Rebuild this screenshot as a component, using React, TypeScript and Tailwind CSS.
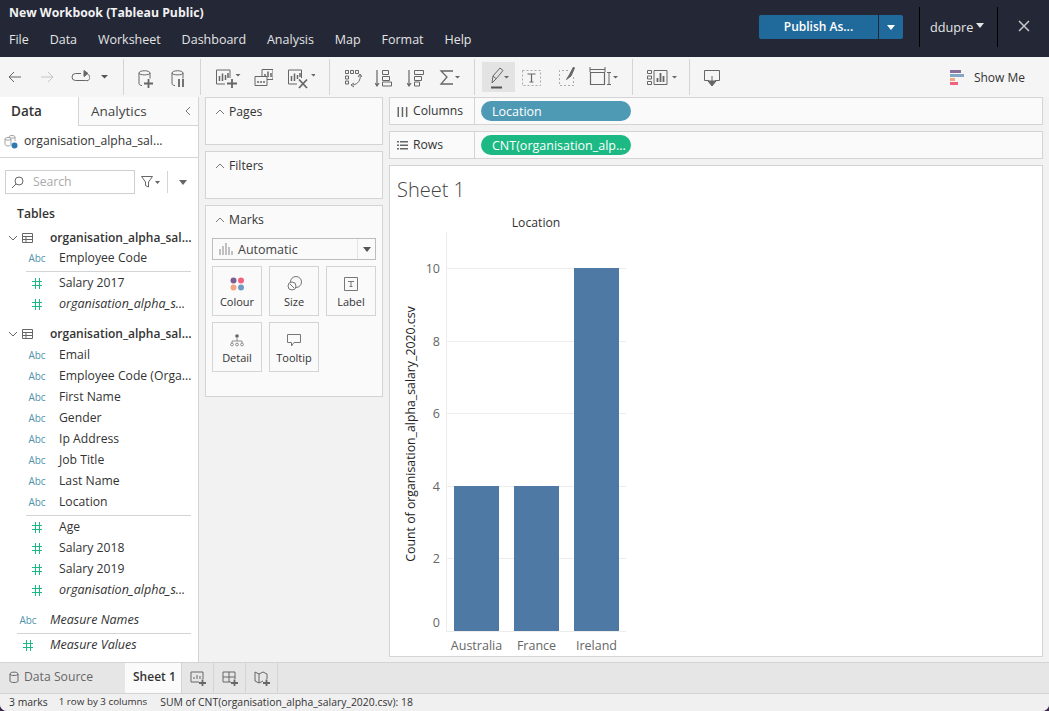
import React from "react";

const S = "#666666";
type IP = { w: number; h?: number; children: React.ReactNode; className?: string };
function Ic({ w, h = 24, children, className = "" }: IP) {
  return (
    <svg width={w} height={h} viewBox={`0 0 ${w} ${h}`} fill="none" stroke={S} strokeWidth={1} className={`shrink-0 ${className}`}>
      {children}
    </svg>
  );
}
const Caret = ({ x, y, s = 2.5, c = "#666" }: { x: number; y: number; s?: number; c?: string }) => (
  <path d={`M${x} ${y}h${s * 2}l-${s} ${s}z`} fill={c} stroke="none" />
);
const Cyl = ({ x, y }: { x: number; y: number }) => (
  <path d={`M${x + 11} ${y + 8}V${y + 2.5}C${x + 11} ${y - 0.5} ${x} ${y - 0.5} ${x} ${y + 2.5}V${y + 13}c0 1 1 2 3 2M${x} ${y + 2.5}c0 2.5 11 2.5 11 0`} />
);

function Sep({ ml }: { ml: number }) {
  return <div className="w-px h-[36px] bg-[#d4d4d4] shrink-0" style={{ marginLeft: ml }} />;
}

function Toolbar() {
  return (
    <div className="h-[40px] bg-[#f5f5f5] flex items-center shrink-0 pl-[8px]">
      <Ic w={14}><path d="M13 12H1M6 7l-5 5 5 5" /></Ic>
      <Ic w={14} className="ml-[18px]"><path stroke="#c4c4c4" d="M1 12h12M8 7l5 5-5 5" /></Ic>
      <Ic w={19} className="ml-[17px]"><path d="M10 8.500H4.500a3 3 0 0 0 0 7h10a3 3 0 0 0 2.500-6" /><path d="M13 5.500v6l4-3z" fill={S} /></Ic>
      <Ic w={9} className="ml-[10px]"><Caret x={1} y={10} s={3.5} c="#555" /></Ic>
      <Sep ml={14} />
      <Ic w={17} className="ml-[14px]"><Cyl x={1} y={5.5} /><path strokeWidth={1.8} d="M6 18.500h9M10.500 14v9" /></Ic>
      <Ic w={14} className="ml-[16px]"><Cyl x={1} y={5.5} /><path strokeWidth={1.8} d="M8 14v8M12 14v8" /></Ic>
      <Sep ml={15} />
      <Ic w={26} className="ml-[14px]"><path d="M15 13V5H1.500v14H10" /><path strokeWidth={1.5} d="M4.500 11v5M7.500 8.500V16M10.500 10v5M13 8v5" /><path strokeWidth={1.8} d="M12 18.500h10M17 14v9" /><Caret x={20.5} y={9} s={2.5} /></Ic>
      <Ic w={19} className="ml-[13px]"><path d="M8 4.500h11v10H8z" /><path d="M1 11.500h12v9H1z" fill="#f5f5f5" /><path strokeWidth={1.5} d="M11 12V9M14 12V6.500M17 12V8M4 18v-2M7 18v-2M10 18v-2" /></Ic>
      <Ic w={28} className="ml-[14px]"><path d="M14.500 13V5H1.500v14H10" /><path strokeWidth={1.5} d="M4.500 11v5M7.500 8.500V16M10.500 10v4M13 8v4" /><path strokeWidth={1.8} d="M12 14.500l8 8.500M20 14.500l-8 8.500" /><Caret x={24} y={9} s={2.5} /></Ic>
      <Sep ml={14} />
      <Ic w={18} className="ml-[14px]"><path d="M1.500 5.500h3v3h-3zM6.500 5.500h3v3h-3zM11.500 5.500h3v3h-3zM1.500 11h3v3h-3zM1.500 16h3v3h-3z" /><path d="M16 10c1 5-2 9-7 10" /><path d="M14 12l2-3 2 3M10 18l-3 2 3 2" /></Ic>
      <Ic w={17} className="ml-[13px]"><path d="M2 5v15M0 18l2 3 2-3" strokeWidth={1.2} /><path d="M7.500 5.500h6v4h-6zM7.500 11.500h7v4h-7zM7.500 17h9v4h-9z" /></Ic>
      <Ic w={17} className="ml-[15px]"><path d="M2 5v15M0 18l2 3 2-3" strokeWidth={1.2} /><path d="M7.500 5.500h9v4h-9zM7.500 11.500h7v4h-7zM7.500 17h5v4h-5z" /></Ic>
      <Ic w={21} className="ml-[15px]"><path strokeWidth={1.3} d="M14 6H2l6 6-6 7h12" /><Caret x={16} y={11} s={2.5} /></Ic>
      <Sep ml={14} />
      <div className="ml-[7px] w-[33px] h-[30px] bg-[#e3e3e3] flex items-center pl-[7px] shrink-0">
        <Ic w={22}><path d="M3 18l1-7 7-8 3 2.500-7 8.500z" strokeWidth={1} /><path d="M4 11l3 2.500" /><path d="M2 22.500h11" strokeWidth={2} stroke="#555" /><Caret x={15} y={11} s={2.5} /></Ic>
      </div>
      <Ic w={20} className="ml-[7px]"><path d="M.5 5.500h18v15H.5z" stroke="#aaa" strokeDasharray="2 2" /><path d="M5.500 9h8M9.500 9v8M7.500 17h4" strokeWidth={1.2} /></Ic>
      <Ic w={16} className="ml-[17px]"><path d="M9 5.500H.5v15h14V11" stroke="#aaa" strokeDasharray="2 2" /><path d="M14.500 2l-4 7.500-3 5 4.500-3.500 3.500-8z" fill={S} /></Ic>
      <Ic w={29} className="ml-[14px]"><path d="M1 4.500h15M1 2v5M16 2v5" strokeWidth={1} /><path d="M1.500 7.500h14v12h-14z" strokeWidth={1.2} /><path d="M18 7.500h4M18 19.500h4M20 7.500v12" strokeWidth={1} /><Caret x={24} y={11} s={2.5} /></Ic>
      <Sep ml={14} />
      <Ic w={31} className="ml-[13px]"><path d="M1.500 5.500h4v3h-4zM1.500 11h4v3h-4zM1.500 16.500h4v3h-4zM8 5.500h13v14H8z" /><path strokeWidth={1.8} d="M11.500 17v-4M14.500 17V8M17.500 17v-6" /><Caret x={26} y={11} s={2.5} /></Ic>
      <Sep ml={12} />
      <Ic w={16} className="ml-[14px]"><path d="M5 15.500H.5v-10h15v10H11" /><path d="M8 11v8" /><path d="M4 16h8l-4 5z" fill={S} /></Ic>
      <div className="flex-1" />
      <div className="flex items-center pr-[24px] pt-[1px]">
        <svg width="14" height="16" className="shrink-0">
          <rect x="0" y="0" width="11" height="3" fill="#8b6f9b" />
          <rect x="0" y="4" width="14" height="3" fill="#86a6c8" />
          <rect x="0" y="8" width="5" height="3" fill="#f2a680" />
          <rect x="0" y="12" width="8" height="3" fill="#f0637f" />
        </svg>
        <span className="ml-[10px] text-[12px] text-[#333]">Show Me</span>
      </div>
    </div>
  );
}

function Header() {
  return (
    <div className="h-[57px] bg-[#232736] flex shrink-0 text-white">
      <div className="flex-1 pl-[9px]">
        <div className="h-[25px] pt-[4px] text-[12.25px] font-bold text-[#f2f2f2] leading-[17px]">New Workbook (Tableau Public)</div>
        <div className="flex h-[32px] items-center pb-[4px] pt-[2px] gap-[20.85px] text-[12.5px] text-[#e4e4e4]">
          {["File", "Data", "Worksheet", "Dashboard", "Analysis", "Map", "Format", "Help"].map((m) => (
            <span key={m}>{m}</span>
          ))}
        </div>
      </div>
      <div className="flex items-center">
        <div className="flex h-[24px] mb-[3px]">
          <div className="w-[119px] bg-[#1f6a9b] rounded-l-[2px] flex items-center justify-center text-[12px] font-semibold">Publish As...</div>
          <div className="w-[24px] ml-px bg-[#1f6a9b] rounded-r-[2px] flex items-center justify-center">
            <svg width="8" height="5"><path d="M0 0h8l-4 5z" fill="#fff" /></svg>
          </div>
        </div>
        <div className="w-px h-[40px] bg-black ml-[16px] mb-[3px]" />
        <div className="w-[77px] flex items-center pl-[10px] text-[12.7px] text-[#e4e4e4] mb-[2px]">
          ddupre
          <svg width="8" height="5" className="ml-[3px] mb-[3px]"><path d="M0 0h8l-4 5z" fill="#e4e4e4" /></svg>
        </div>
        <div className="w-px h-[40px] bg-black mb-[3px]" />
        <div className="w-[51px] flex justify-center mb-[5px]">
          <svg width="12" height="12" stroke="#c8c8c8" strokeWidth="1.5"><path d="M1 1l10 10M11 1L1 11" /></svg>
        </div>
      </div>
    </div>
  );
}

const Abc = () => <span className="w-[30px] text-center text-[10px] text-[#4f93ad] shrink-0">Abc</span>;
const Hash = () => (
  <span className="w-[30px] flex justify-center shrink-0">
    <svg width="12" height="13" fill="#1cb984"><path d="M4 1h1v11H4zM8 1h1v11H8zM1 4h10v1H1zM1 8h10v1H1z" /></svg>
  </span>
);

function Field({ t, k, i }: { t: string; k: "a" | "h"; i?: boolean }) {
  return (
    <div className={`h-[21px] flex items-center pl-[22px] text-[#333] ${i ? "text-[12.5px]" : "text-[12.2px]"}`}>
      {k === "a" ? <Abc /> : <Hash />}
      <span className={`ml-[7px] whitespace-nowrap ${i ? "italic" : ""}`}>{t}</span>
    </div>
  );
}

function TableHead({ t }: { t: string }) {
  return (
    <div className="h-[21px] flex items-center pl-[8px] text-[12px] font-semibold text-[#333]">
      <svg width="10" height="6" fill="none" stroke="#666" className="shrink-0"><path d="M1 1l4 4 4-4" /></svg>
      <svg width="11" height="10" fill="none" stroke="#666" className="ml-[4px] shrink-0"><path d="M.5.500h10v9H.5zM.5 3.500h10M.5 6.500h10M4 3.500v6" /></svg>
      <span className="ml-[17px] whitespace-nowrap">{t}</span>
    </div>
  );
}

function DataPane() {
  return (
    <div className="w-[199px] shrink-0 bg-white border-r border-[#d4d4d4] flex flex-col overflow-hidden">
      <div className="flex h-[29px] shrink-0 text-[13.5px]">
        <div className="w-[78px] pl-[11px] pb-[1px] font-semibold text-[#333] flex items-center">Data</div>
        <div className="flex-1 border-l border-b border-[#d4d4d4] bg-[#fafafa] flex items-center pl-[12px] text-[#444] relative">
          Analytics
          <svg width="7" height="10" fill="none" stroke="#777" className="absolute right-[7px] top-[9px]"><path d="M6 1L2 5l4 4" /></svg>
        </div>
      </div>
      <div className="h-[32px] shrink-0 border-b border-[#d4d4d4] flex items-center pl-[4px] text-[12.2px] text-[#333]">
        <svg width="14" height="15" className="shrink-0" fill="none" stroke="#999" strokeWidth=".9">
          <path d="M5 5V3c0-2 6-2 6 0v4M5 3c0 1.500 6 1.500 6 0" />
          <path d="M1 8V5c0-2 6-2 6 0v5c0 1-1 2-3 2-2 0-3-1-3-2V8M1 5c0 1.500 6 1.500 6 0" fill="#fff" />
          <circle cx="10.500" cy="11.500" r="3" fill="#2f7ab0" stroke="none" />
        </svg>
        <span className="ml-[6px] whitespace-nowrap">organisation_alpha_sal...</span>
      </div>
      <div className="h-[48px] shrink-0 flex items-center pl-[5px]">
        <div className="w-[130px] h-[24px] border border-[#cfcfcf] flex items-center pl-[5px] text-[12.2px] text-[#aaa]">
          <svg width="13" height="13" fill="none" stroke="#666"><circle cx="8" cy="5" r="4" /><path d="M5 8l-4 4" /></svg>
          <span className="ml-[9px]">Search</span>
        </div>
        <svg width="20" height="12" className="ml-[6px]" fill="none" stroke="#666"><path d="M.5.500h11L7.500 6v5L4.500 9.500V6z" /><path d="M14 5h5l-2.500 3z" fill="#666" stroke="none" /></svg>
        <div className="w-px h-[22px] bg-[#d4d4d4] ml-[6px]" />
        <svg width="8" height="5" className="ml-[11px]"><path d="M0 0h8l-4 5z" fill="#666" /></svg>
      </div>
      <div className="h-[15px] shrink-0 pl-[17px] text-[12.2px] font-semibold text-[#333] leading-[15px]">Tables</div>
      <div className="mt-[6px]">
        <TableHead t="organisation_alpha_sal..." />
        <Field t="Employee Code" k="a" />
        <div className="h-px bg-[#d4d4d4] ml-[26px] mr-[7px] mt-[2px] mb-px" />
        <Field t="Salary 2017" k="h" />
        <Field t="organisation_alpha_s..." k="h" i />
        <div className="h-[9px]" />
        <div className="-mt-px pb-px"><TableHead t="organisation_alpha_sal..." /></div>
        {["Email", "Employee Code (Orga...", "First Name", "Gender", "Ip Address", "Job Title", "Last Name", "Location"].map((t) => (
          <Field key={t} t={t} k="a" />
        ))}
        <div className="h-px bg-[#d4d4d4] ml-[26px] mr-[7px] mt-[2px] mb-px" />
        {["Age", "Salary 2018", "Salary 2019"].map((t) => (
          <Field key={t} t={t} k="h" />
        ))}
        <Field t="organisation_alpha_s..." k="h" i />
        <div className="h-[9px]" />
        <div className="h-[21px] flex items-center pl-[13px] text-[12.5px] text-[#333] italic">
          <span className="w-[30px] not-italic text-center text-[10px] text-[#4f93ad]">Abc</span>
          <span className="ml-[7px]">Measure Names</span>
        </div>
        <div className="h-px bg-[#d4d4d4] ml-[17px] mr-[7px] mt-[2px] mb-px" />
        <div className="h-[21px] flex items-center pl-[13px] text-[12.5px] text-[#333] italic">
          <Hash />
          <span className="ml-[7px]">Measure Values</span>
        </div>
      </div>
    </div>
  );
}

function CardHead({ t }: { t: string }) {
  return (
    <div className="flex items-center h-[28px] pl-[9px] text-[12.2px] text-[#333] font-medium">
      <svg width="10" height="6" stroke="#777" fill="none"><path d="M1 5l4-4 4 4" /></svg>
      <span className="ml-[4px]">{t}</span>
    </div>
  );
}

function MarkBtn({ t, children }: { t: string; children: React.ReactNode }) {
  return (
    <div className="w-[50px] h-[50px] border border-[#d4d4d4] flex flex-col items-center text-[11px] text-[#333]">
      <div className="h-[24px] flex items-end justify-center">{children}</div>
      <div className="mt-[4px] leading-[14px]">{t}</div>
    </div>
  );
}

function Shelves() {
  return (
    <div className="w-[178px] shrink-0 ml-[6px] flex flex-col gap-[6px]">
      <div className="h-[48px] bg-[#fafafa] border border-[#d4d4d4]"><CardHead t="Pages" /></div>
      <div className="h-[48px] bg-[#fafafa] border border-[#d4d4d4]"><CardHead t="Filters" /></div>
      <div className="h-[192px] bg-[#fafafa] border border-[#d4d4d4]">
        <CardHead t="Marks" />
        <div className="mx-[6px] mt-[4px] h-[22px] border border-[#bdbdbd] flex items-center text-[12.5px] text-[#444]">
          <svg width="14" height="12" stroke="#888" className="ml-[6px]"><path d="M1 6v6M4 3v9M7 0v12M10 4v8M13 8v4" /></svg>
          <span className="ml-[5px] flex-1 pt-[2px]">Automatic</span>
          <div className="w-[18px] h-full border-l border-[#e4e4e4] flex items-center justify-center">
            <svg width="8" height="5"><path d="M0 0h8l-4 5z" fill="#555" /></svg>
          </div>
        </div>
        <div className="mx-[6px] mt-[6px] grid grid-cols-[50px_50px_50px] gap-x-[7px] gap-y-[6px]">
          <MarkBtn t="Colour">
            <svg width="15" height="14">
              <circle cx="3.500" cy="3.500" r="3" fill="#7b5f8f" />
              <circle cx="11" cy="3.500" r="3" fill="#f0637f" />
              <circle cx="3.500" cy="10.500" r="3" fill="#f2a680" />
              <circle cx="11" cy="10.500" r="3" fill="#6f9ac4" />
            </svg>
          </MarkBtn>
          <MarkBtn t="Size">
            <svg width="15" height="15" fill="none" stroke="#777"><circle cx="9" cy="6" r="5.500" /><circle cx="5" cy="10" r="4" fill="#fafafa" /><path d="M3 8l4 4" /></svg>
          </MarkBtn>
          <MarkBtn t="Label">
            <svg width="14" height="14" fill="none" stroke="#777"><path d="M.5.500h13v13H.5z" /><path d="M4 4.500h6M7 4.500v5M5.500 9.500h3" /></svg>
          </MarkBtn>
          <MarkBtn t="Detail">
            <svg width="14" height="13" fill="none" stroke="#777" strokeWidth=".8"><circle cx="7" cy="2" r="1.800" fill="#666" stroke="none" /><path d="M7 4v3M2 7h10M2 7v2M12 7v2" /><circle cx="2" cy="10.500" r="1.400" /><circle cx="7" cy="10.500" r="1.400" /><circle cx="12" cy="10.500" r="1.400" /></svg>
          </MarkBtn>
          <MarkBtn t="Tooltip">
            <svg width="14" height="13" fill="none" stroke="#777"><path d="M.5.500h13v8H7L4.500 12V8.500h-4z" /></svg>
          </MarkBtn>
        </div>
      </div>
    </div>
  );
}

function ShelfRow({ label, pill, color, icon }: { label: string; pill: string; color: string; icon: React.ReactNode }) {
  return (
    <div className="h-[28px] bg-[#fafafa] border border-[#d4d4d4] flex items-center shrink-0 text-[12.2px] text-[#333]">
      <div className="w-[85px] h-full border-r border-[#d4d4d4] flex items-center pl-[7px]">
        {icon}
        <span className="ml-[5px]">{label}</span>
      </div>
      <div className="ml-[6px] w-[150px] h-[20px] pt-[2px] rounded-full flex items-center pl-[11px] text-[12.5px] text-white" style={{ background: color }}>{pill}</div>
    </div>
  );
}

function Chart() {
  const grid = [[10, 268, 273], [8, 341, 346], [6, 413, 418], [4, 486, 491], [2, 558, 563], [0, 631, 627]] as const;
  const bars = [["Australia", 454, 486], ["France", 514, 486], ["Ireland", 574, 268]] as const;
  const ox = 390, oy = 205;
  return (
    <svg width="652" height="450" viewBox={`${ox} ${oy} 652 450`} className="block" fontFamily="'Open Sans', sans-serif">
      <text x="536" y="227" textAnchor="middle" fontSize="12.2" fill="#333">Location</text>
      <path d="M446.500 232v399" stroke="#ececec" />
      {grid.map(([v, y, ty]) => (
        <g key={v}>
          <path d={`M446 ${y + 0.5}h180`} stroke="#ececec" />
          <text x="440" y={ty} textAnchor="end" fontSize="12.5" fill="#666">{v}</text>
        </g>
      ))}
      {bars.map(([n, x, y]) => (
        <g key={n}>
          <rect x={x} y={y} width="45" height={631 - y} fill="#4f79a5" />
          <text x={x + 22.5} y="650" textAnchor="middle" fontSize="12.5" fill="#666">{n}</text>
        </g>
      ))}
      <text transform="translate(415 434) rotate(-90)" textAnchor="middle" fontSize="12.3" fill="#222">Count of organisation_alpha_salary_2020.csv</text>
    </svg>
  );
}

function Main() {
  return (
    <div className="flex-1 ml-[6px] mr-[6px] flex flex-col gap-[6px] min-w-0">
      <ShelfRow
        label="Columns"
        pill="Location"
        color="#4e9ab5"
        icon={<svg width="11" height="11" fill="#666"><path d="M.5 1h1.500v10H.5zM4.700 1h1.500v10H4.700zM8.900 1h1.500v10H8.900z" /></svg>}
      />
      <ShelfRow
        label="Rows"
        pill="CNT(organisation_alp..."
        color="#1cb984"
        icon={<svg width="11" height="11" fill="#666"><path d="M0 1h2v1.500H0zM3 1h8v1.500H3zM0 4.500h2V6H0zM3 4.500h8V6H3zM0 8h2v1.500H0zM3 8h8v1.500H3z" /></svg>}
      />
      <div className="h-[492px] bg-white border border-[#d4d4d4] pl-[7px] overflow-hidden">
        <div className="h-[39px] pt-[9px] text-[20px] font-light text-[#444] leading-[30px]">Sheet 1</div>
        <div className="-ml-[7px]"><Chart /></div>
      </div>
    </div>
  );
}

function Tabs() {
  return (
    <div className="h-[31px] shrink-0 bg-[#e6e6e6] border-t border-[#d4d4d4] flex text-[12.2px] text-[#666]">
      <div className="w-[125px] flex items-center pl-[9px] pb-[2px]">
        <svg width="10" height="12" fill="none" stroke="#666"><path d="M1 3v7c0 2 8 2 8 0V3C9 .500 1 .500 1 3c0 2 8 2 8 0" /></svg>
        <span className="ml-[5px]">Data Source</span>
      </div>
      <div className="w-[57px] bg-[#fafafa] border-r border-[#d4d4d4] flex items-center pl-[8px] pb-[2px] text-[12px] font-semibold text-[#333]">Sheet 1</div>
      {[0, 1, 2].map((i) => (
        <div key={i} className="w-[32px] border-r border-[#d4d4d4] flex items-center justify-center">
          <svg width="16" height="15" fill="none" stroke="#666">
            {i === 0 && <path d="M9 11H1V1h12v7M4 8V6M7 8V4M10 8V5" />}
            {i === 1 && <path d="M9 11H1V1h12v7M1 6h12M7 1v10" />}
            {i === 2 && <path d="M9 10l-4 2-4-2V1l4 2 4-2 4 2v5M5 3v9" />}
            <path strokeWidth="1.8" d="M9 12h7M12.500 8.500v6.500" />
          </svg>
        </div>
      ))}
    </div>
  );
}

export default function App() {
  return (
    <div className="w-[1049px] h-[711px] bg-[#3a2747]">
      <div className="w-full h-full flex flex-col overflow-hidden rounded-b-[7px] bg-[#f2f2f2] font-['Open_Sans',sans-serif]">
        <Header />
        <Toolbar />
        <div className="h-[565px] flex shrink-0">
          <DataPane />
          <Shelves />
          <Main />
        </div>
        <Tabs />
        <div className="h-[18px] shrink-0 bg-[#f0f0f0] border-t border-[#d4d4d4] flex items-center pl-[9px] text-[10.4px] text-[#333]">
          <span>3 marks</span>
          <span className="ml-[11px] text-[9.8px]">1 row by 3 columns</span>
          <span className="ml-[13px]">SUM of CNT(organisation_alpha_salary_2020.csv): 18</span>
        </div>
      </div>
    </div>
  );
}
